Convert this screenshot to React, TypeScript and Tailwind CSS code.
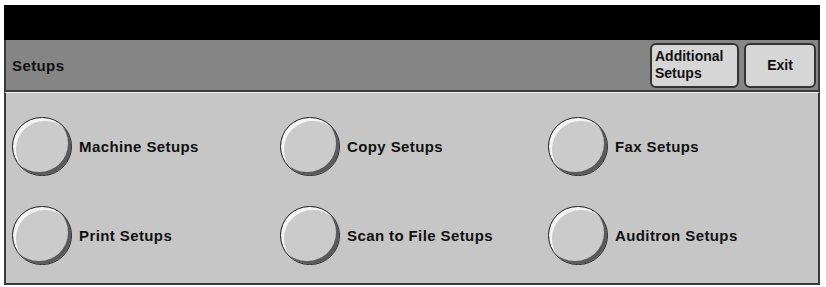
const items = [
  "Machine Setups",
  "Copy Setups",
  "Fax Setups",
  "Print Setups",
  "Scan to File Setups",
  "Auditron Setups",
];

const RoundButton = ({ label }: { label: string }) => {
  return (
    <div className="flex items-center gap-[7px]">
      <div className="w-[60px] h-[59px] rounded-full bg-[#cbcbcb] border border-[#222] shadow-[inset_3px_3px_0_#f4f4f4,inset_-3px_-3px_0_#5a5a5a]" />
      <div className="text-[15px] font-bold tracking-[0.4px] text-[#111] pt-[2px]">{label}</div>
    </div>
  );
};

const App = () => {
  return (
    <div
      className="w-[826px] h-[287px] bg-white pt-[5px] pl-[4px]"
      style={{ fontFamily: '"Liberation Sans", Arial, sans-serif' }}
    >
      <div className="w-[816px] flex flex-col">
        <div className="h-[35px] bg-black" />
        <div className="h-[52px] bg-[#858585] border-x-2 border-b-2 border-[#3a3a3a] flex items-center justify-between pl-[6px] pr-[2px]">
          <div className="text-[15px] font-bold tracking-[0.4px] text-[#111] pt-[2px]">Setups</div>
          <div className="flex gap-[5px]">
            <div className="w-[89px] h-[45px] rounded-[6px] bg-[#d6d6d6] border-2 border-[#333] flex flex-col justify-center pl-[3px] text-[14px] font-bold leading-[17px] text-[#111]">
              <span>Additional</span>
              <span>Setups</span>
            </div>
            <div className="w-[72px] h-[45px] rounded-[6px] bg-[#d6d6d6] border-2 border-[#333] flex items-center justify-center text-[14px] font-bold text-[#111]">
              Exit
            </div>
          </div>
        </div>
        <div className="h-[193px] bg-[#c6c6c6] border-x-2 border-b-2 border-[#3a3a3a] border-t border-t-[#eee] grid grid-cols-[268px_268px_1fr] grid-rows-[89px_89px] content-center pl-[6px] pt-[5px]">
          {items.map((item) => (
            <RoundButton key={item} label={item} />
          ))}
        </div>
      </div>
    </div>
  );
};

export default App;
